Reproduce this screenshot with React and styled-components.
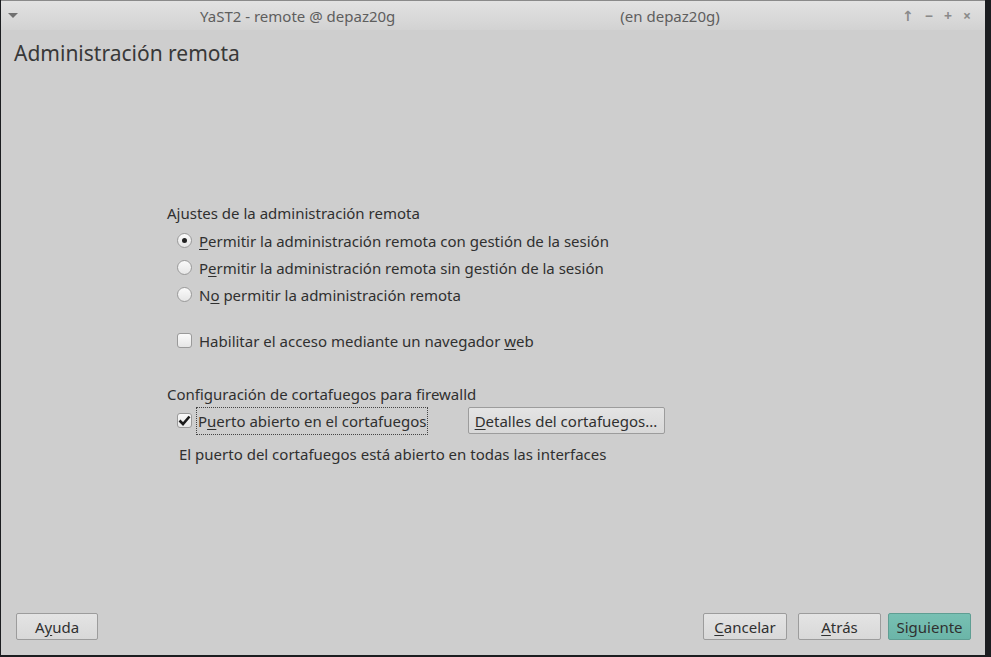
import React from "react";
import styled, { createGlobalStyle } from "styled-components";

const Global = createGlobalStyle`
  html, body { margin: 0; padding: 0; background: #1b1d20; }
  body { font-family: "Noto Sans", "DejaVu Sans", sans-serif; }
`;

const Screen = styled.div`
  width: 991px;
  height: 657px;
  background: #1b1d20;
  overflow: hidden;
`;

const Window = styled.div`
  margin-left: 1px;
  width: 984px;
  height: 655px;
  background: #cecece;
  display: flex;
  flex-direction: column;
`;

const TitleBar = styled.div`
  height: 29px;
  border-top: 1px solid #8a8a8a;
  background: linear-gradient(#e2e2e2, #d2d2d2);
  display: flex;
  align-items: center;
  font-size: 15px;
  color: #5e5e5e;
`;

const MenuArrow = styled.div`
  width: 0;
  height: 0;
  margin-left: 7px;
  border-left: 5px solid transparent;
  border-right: 5px solid transparent;
  border-top: 5px solid #707070;
`;

const TitleText = styled.span`
  margin-left: ${p => p.$ml}px;
  white-space: nowrap;
`;

const TitleButtons = styled.div`
  margin-left: auto;
  margin-right: 14px;
  display: flex;
  gap: 11px;
  color: #8a8a8a;
  font-weight: 700;
  font-size: 14px;
`;

const Content = styled.div`
  flex: 1;
  display: flex;
  flex-direction: column;
  padding: 0 14px 0 14px;
  color: #303030;
`;

const Heading = styled.h1`
  margin: 9px 0 0 -1px;
  font-size: 21px;
  font-weight: 400;
  line-height: 28px;
  color: #383838;
`;

const Form = styled.div`
  margin: 133px 0 0 152px;
  display: flex;
  flex-direction: column;
  font-size: 15px;
`;

const GroupLabel = styled.div`
  height: 26px;
  line-height: 26px;
  margin-top: ${p => p.$mt || 0}px;
`;

const Row = styled.div`
  height: 27px;
  display: flex;
  align-items: center;
  padding-left: 10px;
  margin-top: ${p => p.$mt || 0}px;
`;

const Radio = styled.span`
  width: 15px;
  height: 15px;
  border-radius: 50%;
  border: 1px solid #9a9a9a;
  background: linear-gradient(#fafafa, #e6e6e6);
  box-sizing: border-box;
  margin-right: 7px;
  display: flex;
  align-items: center;
  justify-content: center;
  &::after {
    content: "";
    width: 5px;
    height: 5px;
    border-radius: 50%;
    background: ${p => (p.$on ? "#222" : "transparent")};
  }
`;

const Check = styled.span`
  width: 15px;
  height: 15px;
  border-radius: 3px;
  border: 1px solid #9a9a9a;
  background: linear-gradient(#fafafa, #e6e6e6);
  box-sizing: border-box;
  margin-right: 7px;
  display: flex;
  align-items: center;
  justify-content: center;
`;

const Focus = styled.span`
  outline: 1px dotted #444;
  padding: 3px 0 3px 1px;
  margin-left: -2px;
`;

const U = styled.span`
  text-decoration: underline;
  text-underline-offset: 2px;
`;

const Button = styled.button`
  font-family: "Noto Sans", "DejaVu Sans", sans-serif;
  font-size: 15px;
  color: #303030;
  height: 27px;
  width: ${p => p.$w}px;
  padding: 0;
  border: 1px solid ${p => (p.$primary ? "#5f9e93" : "#9c9c9c")};
  border-radius: 2px;
  background: ${p => (p.$primary ? "linear-gradient(#78c0b3, #6bb5a8)" : "linear-gradient(#e4e4e4, #d8d8d8)")};
`;

const DetailsButton = styled(Button)`
  margin-left: 41px;
`;

const Info = styled.div`
  margin-top: 7px;
  padding-left: 12px;
  height: 26px;
  line-height: 26px;
`;

const Footer = styled.div`
  margin-top: auto;
  height: 42px;
  display: flex;
  align-items: flex-start;
  padding-left: 1px;
`;

const FooterRight = styled.div`
  margin-left: auto;
  display: flex;
`;

function Tick() {
  return (
    <svg width="13" height="11" viewBox="0 0 13 11">
      <path d="M1.5 5.5 L5 9 L11.5 1.5" fill="none" stroke="#1a1a1a" strokeWidth="2.6" />
    </svg>
  );
}

export default function App() {
  return (
    <Screen>
      <Global />
      <Window>
        <TitleBar>
          <MenuArrow />
          <TitleText $ml={182}>YaST2 - remote @ depaz20g</TitleText>
          <TitleText $ml={225}>(en depaz20g)</TitleText>
          <TitleButtons>
            <span>↑</span>
            <span>−</span>
            <span>+</span>
            <span>×</span>
          </TitleButtons>
        </TitleBar>
        <Content>
          <Heading>Administración remota</Heading>
          <Form>
            <GroupLabel>Ajustes de la administración remota</GroupLabel>
            <Row $mt={1}>
              <Radio $on />
              <span><U>P</U>ermitir la administración remota con gestión de la sesión</span>
            </Row>
            <Row>
              <Radio />
              <span>P<U>e</U>rmitir la administración remota sin gestión de la sesión</span>
            </Row>
            <Row>
              <Radio />
              <span>N<U>o</U> permitir la administración remota</span>
            </Row>
            <Row $mt={19}>
              <Check />
              <span>Habilitar el acceso mediante un navegador <U>w</U>eb</span>
            </Row>
            <GroupLabel $mt={27}>Configuración de cortafuegos para firewalld</GroupLabel>
            <Row $mt={0}>
              <Check><Tick /></Check>
              <Focus>P<U>u</U>erto abierto en el cortafuegos</Focus>
              <DetailsButton $w={197}><U>D</U>etalles del cortafuegos...</DetailsButton>
            </Row>
            <Info>El puerto del cortafuegos está abierto en todas las interfaces</Info>
          </Form>
          <Footer>
            <Button $w={82}>A<U>y</U>uda</Button>
            <FooterRight>
              <Button $w={84} style={{ marginRight: 11 }}><U>C</U>ancelar</Button>
              <Button $w={83} style={{ marginRight: 7 }}><U>A</U>trás</Button>
              <Button $w={83} $primary>Si<U>g</U>uiente</Button>
            </FooterRight>
          </Footer>
        </Content>
      </Window>
    </Screen>
  );
}
